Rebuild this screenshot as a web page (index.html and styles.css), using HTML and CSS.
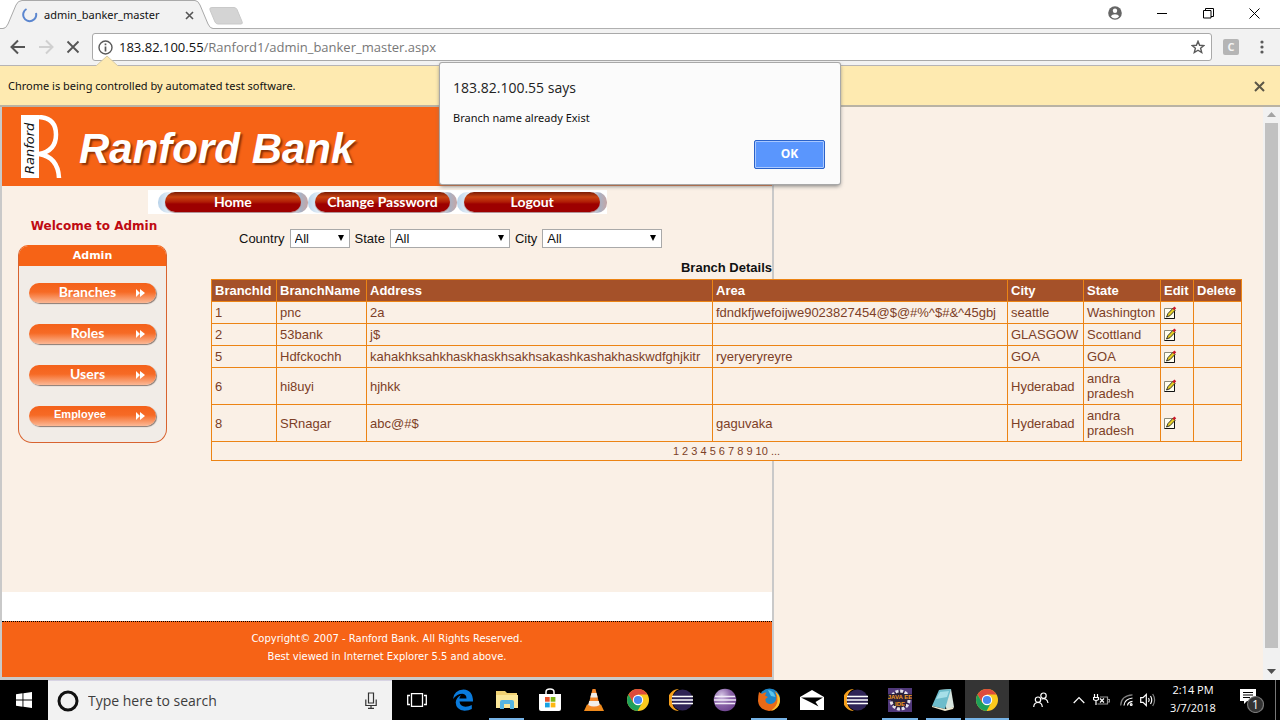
FILE: index.html
```html
<!DOCTYPE html>
<html lang="en">
<head>
<meta charset="utf-8">
<title>admin_banker_master</title>
<link rel="stylesheet" href="styles.css">
</head>
<body>
<svg class="defs" aria-hidden="true">
  <symbol id="chrome" viewBox="0 0 24 24">
    <circle cx="12" cy="12" r="11" fill="#fbc91d"/>
    <path d="M12 12 2.500 6.500A11 11 0 0 1 21.500 6.500H12z" fill="#de4b3c"/>
    <path d="M2.500 6.500 7.300 14.800 12 12 12 6.500z" fill="#de4b3c"/>
    <path d="M2.500 6.500A11 11 0 0 0 11.500 23L16 15 7.400 15z" fill="#1ea05a"/>
    <circle cx="12" cy="12" r="5.200" fill="#fff"/>
    <circle cx="12" cy="12" r="4.100" fill="#4688f1"/>
  </symbol>
  <symbol id="eclipse" viewBox="0 0 24 24">
    <path d="M10 1A11 11 0 0 0 10 23A12 12 0 0 1 10 1z" fill="#f7a01c"/>
    <circle cx="13.500" cy="12" r="10.500" fill="#2f2456"/>
    <path d="M3 8.500h21M2.500 12h21.500M3 15.500h21" stroke="#fff" stroke-width="1.700"/>
  </symbol>
  <symbol id="edit" viewBox="0 0 14 14">
    <path d="M.5 2.500h10v10h-10z" fill="#fffef0" stroke="#8a8a7a"/>
    <path d="M10.500 5v7.500H.5" fill="none" stroke="#111"/>
    <path d="M2.500 11 4 7.500 9 2.200 11.200 4.200 6 9.700z" fill="#e8d024" stroke="#222" stroke-width=".9"/>
    <path d="M9.300 3.300 11.300 1.300" stroke="#c9182b" stroke-width="2.600"/>
  </symbol>
  <symbol id="next" viewBox="0 0 9 8"><path d="M0 0 4 4 0 8zM4 0 9 4 4 8z" fill="#fff"/></symbol>
</svg>

<header class="tabstrip">
  <svg class="tabshape" viewBox="0 0 250 29" aria-hidden="true">
    <path d="M0 28.500H3Q6 28.500 8 24L16 5Q18 .5 22 .5H195Q198 .5 200 5L208 24Q210 28.500 213 28.500H250V29H0z" fill="#f2f2f2"/>
    <path d="M0 28.500H3Q6 28.500 8 24L16 5Q18 .5 22 .5H195Q198 .5 200 5L208 24Q210 28.500 213 28.500H250" fill="none" stroke="#a9a9a9"/>
    <path d="M212 7.500h22q2 0 3 2l5 12q1 2.500-1 2.500h-23q-2 0-3-2l-5-12q-1-2.500 2-2.500z" fill="#d4d4d4" stroke="#c9c9c9"/>
  </svg>
  <div class="tab">
    <svg width="16" height="16" viewBox="0 0 16 16"><path d="M4.500 2A6.500 6.500 0 1 0 14 6" fill="none" stroke="#5b86cf" stroke-width="2"/></svg>
    <span class="tabtitle">admin_banker_master</span>
    <button class="iconbtn" aria-label="Close tab"><svg width="9" height="9" viewBox="0 0 9 9"><path d="M1 1 8 8M8 1 1 8" stroke="#555" stroke-width="1.600"/></svg></button>
  </div>
  <div class="wincontrols">
    <button class="iconbtn" aria-label="Profile"><svg width="14" height="14" viewBox="0 0 14 14"><circle cx="7" cy="7" r="6.800" fill="#666"/><circle cx="7" cy="4.800" r="2.200" fill="#fff"/><path d="M2.800 10.300Q4 8.200 7 8.200T11.200 10.300Q9.500 12.500 7 12.500T2.800 10.300z" fill="#fff"/></svg></button>
    <button class="iconbtn" aria-label="Minimize"><svg width="11" height="11" viewBox="0 0 11 11"><path d="M0 5.500h10" stroke="#000"/></svg></button>
    <button class="iconbtn" aria-label="Restore"><svg width="11" height="11" viewBox="0 0 11 11"><path d="M.5 2.500h7.500v7.500H.5zM2.500 2.500V.5h8v8H8" fill="none" stroke="#000"/></svg></button>
    <button class="iconbtn" aria-label="Close"><svg width="11" height="11" viewBox="0 0 11 11"><path d="M.5.5 10.500 10.500M10.500.5.5 10.500" stroke="#000"/></svg></button>
  </div>
</header>

<div class="toolbar">
  <button class="iconbtn" aria-label="Back"><svg width="16" height="16" viewBox="0 0 16 16"><path d="M15 8H2M8 1.500 1.500 8 8 14.500" fill="none" stroke="#555" stroke-width="2"/></svg></button>
  <button class="iconbtn" aria-label="Forward"><svg width="16" height="16" viewBox="0 0 16 16"><path d="M1 8H14M8 1.500 14.500 8 8 14.500" fill="none" stroke="#d0d0d0" stroke-width="2"/></svg></button>
  <button class="iconbtn" aria-label="Stop"><svg width="14" height="14" viewBox="0 0 14 14"><path d="M1.500 1.500 12.500 12.500M12.500 1.500 1.500 12.500" stroke="#555" stroke-width="1.800"/></svg></button>
  <div class="omnibox">
    <svg width="15" height="15" viewBox="0 0 15 15"><circle cx="7.500" cy="7.500" r="6.500" fill="none" stroke="#5a5a5a" stroke-width="1.400"/><path d="M7.500 6.500v5M7.500 3.500v1.700" stroke="#5a5a5a" stroke-width="1.700"/></svg>
    <div class="url"><b>183.82.100.55</b>/Ranford1/admin_banker_master.aspx</div>
    <button class="iconbtn" aria-label="Bookmark"><svg width="14" height="14" viewBox="0 0 14 14"><path d="M7 1.300 8.600 5.300 12.900 5.600 9.600 8.300 10.700 12.500 7 10.200 3.300 12.500 4.400 8.300 1.100 5.600 5.400 5.300z" fill="none" stroke="#5a5a5a" stroke-width="1.400"/></svg></button>
  </div>
  <button class="ext" aria-label="Extension">C</button>
  <button class="iconbtn" aria-label="Menu"><svg width="4" height="14" viewBox="0 0 4 14"><circle cx="2" cy="2" r="1.600" fill="#5a5a5a"/><circle cx="2" cy="7" r="1.600" fill="#5a5a5a"/><circle cx="2" cy="12" r="1.600" fill="#5a5a5a"/></svg></button>
</div>

<div class="infobar">
  <svg class="notch" viewBox="0 0 22 12" aria-hidden="true"><path d="M0 11 11 1 22 11V12H0z" fill="#feeab0"/><path d="M0 11 11 1 22 11" fill="none" stroke="#d6cba8"/></svg>
  <span>Chrome is being controlled by automated test software.</span>
  <button class="iconbtn" aria-label="Dismiss"><svg width="11" height="11" viewBox="0 0 11 11"><path d="M1 1 10 10M10 1 1 10" stroke="#5c5747" stroke-width="2"/></svg></button>
</div>

<div class="viewport">
  <main class="page">
    <div class="frame">
      <div class="banner">
        <svg width="41" height="63" viewBox="0 0 41 63" role="img" aria-label="Ranford">
          <path d="M0 0h18v63H0z" fill="#fff"/>
          <path d="M18 2Q35 3 35 19.500T18 39Q37 42 38 63" fill="none" stroke="#fff" stroke-width="4.500"/>
          <text x="-59" y="13" transform="rotate(-90)" class="logotext">Ranford</text>
        </svg>
        <h1>Ranford Bank</h1>
      </div>
      <div class="body">
        <nav class="topnav">
          <a href="#"><span>Home</span></a><a href="#"><span>Change Password</span></a><a href="#"><span>Logout</span></a>
        </nav>
        <div class="columns">
          <aside class="side">
            <p class="welcome">Welcome to Admin</p>
            <div class="panel">
              <h2>Admin</h2>
              <ul>
                <li><a href="#">Branches<svg width="9" height="8"><use href="#next"/></svg></a></li>
                <li><a href="#">Roles<svg width="9" height="8"><use href="#next"/></svg></a></li>
                <li><a href="#">Users<svg width="9" height="8"><use href="#next"/></svg></a></li>
                <li><a href="#" class="plain">Employee<svg width="9" height="8"><use href="#next"/></svg></a></li>
              </ul>
            </div>
          </aside>
          <section class="content">
            <form class="filters">
              <label for="country">Country</label>
              <span class="pick short"><select id="country"><option>All</option></select></span>
              <label for="state">State</label>
              <span class="pick"><select id="state"><option>All</option></select></span>
              <label for="city">City</label>
              <span class="pick"><select id="city"><option>All</option></select></span>
            </form>
            <table class="branches">
              <caption>Branch Details</caption>
              <colgroup><col class="c-id"><col class="c-name"><col class="c-addr"><col class="c-area"><col class="c-city"><col class="c-state"><col class="c-edit"><col class="c-del"></colgroup>
              <thead><tr><th>BranchId</th><th>BranchName</th><th>Address</th><th>Area</th><th>City</th><th>State</th><th>Edit</th><th>Delete</th></tr></thead>
              <tbody>
                <tr><td>1</td><td>pnc</td><td>2a</td><td>fdndkfjwefoijwe9023827454@$@#%^$#&amp;^45gbj</td><td>seattle</td><td>Washington</td><td><a href="#" aria-label="Edit"><svg width="14" height="14"><use href="#edit"/></svg></a></td><td></td></tr>
                <tr><td>2</td><td>53bank</td><td>j$</td><td></td><td>GLASGOW</td><td>Scottland</td><td><a href="#" aria-label="Edit"><svg width="14" height="14"><use href="#edit"/></svg></a></td><td></td></tr>
                <tr><td>5</td><td>Hdfckochh</td><td>kahakhksahkhaskhaskhsakhsakashkashakhaskwdfghjkitr</td><td>ryeryeryreyre</td><td>GOA</td><td>GOA</td><td><a href="#" aria-label="Edit"><svg width="14" height="14"><use href="#edit"/></svg></a></td><td></td></tr>
                <tr><td>6</td><td>hi8uyi</td><td>hjhkk</td><td></td><td>Hyderabad</td><td>andra pradesh</td><td><a href="#" aria-label="Edit"><svg width="14" height="14"><use href="#edit"/></svg></a></td><td></td></tr>
                <tr><td>8</td><td>SRnagar</td><td>abc@#$</td><td>gaguvaka</td><td>Hyderabad</td><td>andra pradesh</td><td><a href="#" aria-label="Edit"><svg width="14" height="14"><use href="#edit"/></svg></a></td><td></td></tr>
              </tbody>
              <tfoot><tr><td colspan="8" class="pager"><span>1</span> <a href="#">2</a> <a href="#">3</a> <a href="#">4</a> <a href="#">5</a> <a href="#">6</a> <a href="#">7</a> <a href="#">8</a> <a href="#">9</a> <a href="#">10</a> <a href="#">...</a></td></tr></tfoot>
            </table>
          </section>
        </div>
      </div>
      <footer class="foot">
        <p>Copyright© 2007 - Ranford Bank. All Rights Reserved.</p>
        <p>Best viewed in Internet Explorer 5.5 and above.</p>
      </footer>
    </div>
  </main>
  <div class="scrollbar" aria-hidden="true">
    <svg width="9" height="5" viewBox="0 0 9 5"><path d="M0 5 4.500 0 9 5z" fill="#a3a3a3"/></svg>
    <div class="thumb"></div>
    <svg width="9" height="5" viewBox="0 0 9 5"><path d="M0 0 4.500 5 9 0z" fill="#505050"/></svg>
  </div>
</div>

<div class="taskbar">
  <button class="start" aria-label="Start"><svg width="16" height="16" viewBox="0 0 16 16"><path d="M0 2.300 6.500 1.300V7.500H0zM7.400 1.200 16 0V7.500H7.400zM0 8.500H6.500V14.700L0 13.700zM7.400 8.500H16V16L7.400 14.800z" fill="#fff"/></svg></button>
  <div class="search">
    <svg width="22" height="22" viewBox="0 0 22 22"><circle cx="11" cy="11" r="9" fill="none" stroke="#111" stroke-width="3"/></svg>
    <input type="text" placeholder="Type here to search" aria-label="Type here to search">
    <svg width="12" height="17" viewBox="0 0 12 17"><path d="M3.500 1h5v10h-5zM.8 7.500V13.500H11.200V7.500M6 13.500V16M3 16.300h6" fill="none" stroke="#333" stroke-width="1.200"/></svg>
  </div>
  <button class="taskview" aria-label="Task view"><svg width="20" height="14" viewBox="0 0 20 14"><path d="M4.500.7h11v12.600h-11zM3 2.500H.7v9H3M17 2.500h2.300v9H17" fill="none" stroke="#fff" stroke-width="1.300"/></svg></button>
  <div class="apps">
    <button aria-label="Edge"><svg width="22" height="22" viewBox="0 0 22 22"><path d="M1 10Q2 1 11.500 .5 21 1 21 12.500H7.500Q8 17.500 13.500 17.800 17 17.800 19.800 16V20Q17 21.700 12.500 21.700 4 21 3.700 13.500 4 8.500 9 6.300 7.400 8 7.400 9.600H14.500Q14.500 5 10.500 4.700 5 4.800 1 10z" fill="#0a7bdc"/></svg></button>
    <button class="open" aria-label="File Explorer"><svg width="22" height="20" viewBox="0 0 22 20"><path d="M0 1h9l2 2h10v14H0z" fill="#f0d173"/><path d="M0 5h22v13H0z" fill="#fbe799"/><path d="M4 19V12q0-2 2-2h10q2 0 2 2v7h-4v-5H8v5z" fill="#55b5e2"/></svg></button>
    <button aria-label="Store"><svg width="24" height="24" viewBox="0 0 24 24"><path d="M8 7V4q0-3 4-3t4 3v3" fill="none" stroke="#fff" stroke-width="1.500"/><path d="M1 6h22v15q0 2-2 2H3q-2 0-2-2z" fill="#fff"/><path d="M7 9h4.700v4.700H7z" fill="#e8512a"/><path d="M12.700 9h4.700v4.700h-4.700z" fill="#7db613"/><path d="M7 14.700h4.700v4.700H7z" fill="#19a2e3"/><path d="M12.700 14.700h4.700v4.700h-4.700z" fill="#fdb813"/></svg></button>
    <button aria-label="VLC"><svg width="20" height="24" viewBox="0 0 20 24"><path d="M3 16.500h14l3 6.500H0z" fill="#f08a1c"/><path d="M8.500 1h3L16 18.500Q10 22 4 18.500z" fill="#f4862a"/><path d="M7.500 5h5l1.200 4.500H6.300zM5.200 13h9.600l1 4Q10 20 4.200 17z" fill="#f1eee9"/></svg></button>
    <button aria-label="Chrome"><svg width="24" height="24"><use href="#chrome"/></svg></button>
    <button aria-label="Eclipse"><svg width="24" height="24"><use href="#eclipse"/></svg></button>
    <button aria-label="Eclipse Installer"><svg width="24" height="24" viewBox="0 0 24 24"><defs><radialGradient id="orb" cx=".35" cy=".3" r=".8"><stop offset="0" stop-color="#d6c6e6"/><stop offset=".5" stop-color="#8a64a8"/><stop offset="1" stop-color="#6a3f8c"/></radialGradient></defs><circle cx="12" cy="12" r="11.300" fill="url(#orb)"/><path d="M2 8.500h20M1 12h22M2 15.500h20" stroke="#f1eaf8" stroke-width="1.500"/></svg></button>
    <button class="open" aria-label="Firefox"><svg width="24" height="24" viewBox="0 0 24 24"><circle cx="12.500" cy="11" r="10.500" fill="#1d86c8"/><path d="M11 2Q17 3 18.500 9L14 8z" fill="#5cc6ee"/><path d="M2 4 5 6Q7 4 9.500 4.500L8 7.500 11 9 8.500 11Q8 15 12 16 17 16.500 19 12 20 7 17.500 3 23 7 23 13 22 22.500 12 23 2 22 1 13 1 8 2 4z" fill="#e96a17"/><path d="M18.500 4Q23 7 23 13 22 21 14 22.800 20.500 18 20.500 12 20.500 7 18.500 4z" fill="#fbc333"/></svg></button>
    <button aria-label="Mail"><svg width="24" height="20" viewBox="0 0 24 20"><path d="M0 7 12 0 24 7V20H0z" fill="#fff"/><path d="M1 7.500H23L15.500 12 18.500 16.500 11 12.500z" fill="#000"/></svg></button>
    <button aria-label="Eclipse"><svg width="24" height="24"><use href="#eclipse"/></svg></button>
    <button class="open" aria-label="Java EE IDE"><svg width="24" height="24" viewBox="0 0 24 24"><path d="M0 0h24v24H0z" fill="#50387a"/><circle cx="12" cy="12" r="9" fill="#29203a" stroke="#e5e0ea" stroke-width="3" stroke-dasharray="3 1.700"/><path d="M0 6h24v6H0zM6 12h12v6H6z" fill="#29203a"/><text x="12" y="11" class="jee">JAVA EE</text><text x="12" y="18" class="jee">IDE</text></svg></button>
    <button class="open" aria-label="Notepad"><svg width="24" height="22" viewBox="0 0 24 22"><path d="M8 1 20 0 23 18 16 21z" fill="#d8e5df"/><path d="M8 1 20 0 14 20 1 17z" fill="#6dbccb"/><path d="M9 3 18 2 16 8 5 10z" fill="#a6dfe8"/><path d="M1 17 14 20 23 18 22 20 14 22 1 18z" fill="#ece7cf"/></svg></button>
    <button class="open current" aria-label="Chrome"><svg width="24" height="24"><use href="#chrome"/></svg></button>
  </div>
  <div class="tray">
    <button class="people" aria-label="People"><svg width="16" height="16" viewBox="0 0 16 16"><circle cx="10.500" cy="3.700" r="2.700"/><path d="M8.500 7Q14 5.500 15 11"/><circle cx="5" cy="7.700" r="2.700"/><path d="M.7 15Q1 10.500 5 10.500T9.300 15"/></svg></button>
    <button class="more" aria-label="Hidden icons"><svg width="12" height="8" viewBox="0 0 12 8"><path d="M.7 7 6 1.500 11.300 7"/></svg></button>
    <button class="battery" aria-label="Battery"><svg width="17" height="12" viewBox="0 0 17 12"><path d="M1.500 0v3M4.500 0v3M.5 3.500h5v2q-2.500 2-5 0zM3 6.500V11"/><path d="M7 3h7.500v7H4.500M15 5.500h1.500v2.500H15" opacity=".6"/><path d="M7 4.500l4 4M11 4.500 7 8.500"/></svg></button>
    <button class="wifi" aria-label="Network"><svg width="13" height="12" viewBox="0 0 13 12"><path d="M.7 11.500Q1 1.500 12.500.8" opacity=".5"/><path d="M4 11.500Q4.500 5 12.500 4M7.500 11.500Q8 7.800 12.500 7.300"/><circle cx="11.200" cy="10.500" r=".9"/></svg></button>
    <button class="sound" aria-label="Volume"><svg width="16" height="14" viewBox="0 0 16 14"><path d="M.7 4.700H3L6.300 1.500V12.500L3 9.300H.7zM8.500 5Q10 7 8.500 9M10.500 3Q13 7 10.500 11"/><path d="M12.700 1Q16.500 7 12.700 13" opacity=".5"/></svg></button>
    <div class="clock"><span>2:14 PM</span><span>3/7/2018</span></div>
    <button class="notes" aria-label="Notifications"><svg width="24" height="26" viewBox="0 0 24 26"><path d="M0 2h16v12H7l-3 3v-3H0z" class="solid"/><path d="M3 5.500h10M3 8h10M3 10.500h7" class="lines"/><circle cx="15.500" cy="17.500" r="8" class="badge"/><text x="15.500" y="22" class="count">1</text></svg></button>
    <div class="peek"></div>
  </div>
</div>

<div class="dialog" role="alertdialog" aria-labelledby="dlg-title" aria-describedby="dlg-text">
  <h2 id="dlg-title">183.82.100.55 says</h2>
  <p id="dlg-text">Branch name already Exist</p>
  <button>OK</button>
</div>
</body>
</html>
```
FILE: styles.css
```css
* { box-sizing: border-box; }
html, body { height: 100%; }
body {
  margin: 0;
  display: flex;
  flex-direction: column;
  position: relative;
  overflow: hidden;
  background: #fff;
  font: 12px/16px "Open Sans", "Noto Sans", sans-serif;
  color: #111;
}
h1, h2, p, ul { margin: 0; padding: 0; }
ul { list-style: none; }
a { text-decoration: none; color: inherit; }
button { font: inherit; margin: 0; padding: 0; border: 0; background: none; color: inherit; }
svg { display: block; flex: none; }
.defs { position: absolute; width: 0; height: 0; }
.iconbtn { display: flex; align-items: center; justify-content: center; }

/* Browser window */
.tabstrip {
  flex: none;
  height: 29px;
  display: flex;
  justify-content: space-between;
  position: relative;
  border-bottom: 1px solid #b0b0b0;
}
.tabshape { position: absolute; left: 0; top: 0; width: 250px; height: 29px; }
.tab {
  position: relative;
  width: 210px;
  padding: 2px 16px 0 22px;
  display: flex;
  align-items: center;
  gap: 6px;
}
.tabtitle { flex: 1; font: 11px/16px "Noto Sans", sans-serif; white-space: nowrap; }
.wincontrols { display: flex; align-items: center; gap: 35px; padding: 0 20px 2px 0; }
.toolbar {
  flex: none;
  height: 37px;
  display: flex;
  align-items: center;
  gap: 12px;
  padding: 0 16px 0 10px;
  background: #f2f2f2;
  border-bottom: 1px solid #b6b4b5;
}
.omnibox {
  flex: 1;
  height: 28px;
  display: flex;
  align-items: center;
  gap: 6px;
  padding: 0 6px 0 5px;
  background: #fff;
  border: 1px solid #a9a9a9;
  border-radius: 3px;
}
.url { flex: 1; font-size: 13px; color: #777; white-space: nowrap; }
.url b { font-weight: 400; color: #111; }
.ext { width: 16px; height: 16px; margin: 0 9px 0 -1px; border-radius: 2px; background: #b5b5b5; color: #f4f4f4; font-size: 11px; line-height: 16px; font-weight: 700; }
.infobar {
  flex: none;
  height: 41px;
  position: relative;
  display: flex;
  align-items: center;
  justify-content: space-between;
  padding: 1px 15px 0 8px;
  background: #feeab0;
  border-bottom: 2px solid #b9b3a4;
  font: 11px/16px "Noto Sans", sans-serif;
}
.notch { position: absolute; left: 96px; top: -11px; width: 22px; height: 12px; }
.viewport { flex: 1; min-height: 0; display: flex; }
.page { flex: 1; min-width: 0; overflow: hidden; background: #faf0e6; display: flex; }
.scrollbar {
  flex: none;
  width: 17px;
  display: flex;
  flex-direction: column;
  align-items: center;
  gap: 6px;
  padding: 5px 2px 6px;
  background: #f1f1f1;
}
.scrollbar .thumb { flex: 1; width: 13px; margin-bottom: 15px; background: #c1c1c1; }

/* Bank site */
.frame {
  flex: 1;
  max-width: 774px;
  display: flex;
  flex-direction: column;
  border: solid #c9c9c9;
  border-width: 0 2px 3px;
  font-family: "Liberation Sans", Arial, sans-serif;
}
.banner {
  flex: none;
  height: 79px;
  display: flex;
  align-items: center;
  gap: 17px;
  padding-left: 19px;
  background: #f66316;
}
.banner h1 {
  font: italic 700 42px/48px "Liberation Sans", Arial, sans-serif;
  padding-top: 4px;
  color: #fff;
  text-shadow: 2px 2px 2px #8a3208;
}
.logotext { font: italic 13px "DejaVu Sans", Verdana, sans-serif; fill: #111; }
.body { flex: 1; min-height: 0; padding-top: 4px; }
.topnav {
  display: flex;
  width: 459px;
  margin-left: 146px;
  padding: 2px 0 1px 10px;
  background: #fff;
}
.topnav a {
  flex: 1;
  height: 21px;
  padding: 0 7px;
  border-radius: 10px;
  background: linear-gradient(90deg, #b9d3ea, #fff 12%, #fff 88%, #a9b2c4 95%, #c4a5a5);
}
.topnav span {
  display: block;
  height: 20px;
  border-radius: 10px;
  background: linear-gradient(#7a1c06, #c94412 25%, #b01c05 50%, #9d0000 60%, #9d0000);
  box-shadow: 0 1px 1px #a88;
  color: #fff;
  font: 700 14px/19px Lato, sans-serif;
  text-align: center;
}
.columns { display: flex; align-items: flex-start; }
.side { flex: none; width: 209px; padding: 4px 44px 0 16px; }
.welcome {
  font: 700 12px/16px "DejaVu Sans", Verdana, sans-serif;
  padding-left: 3px;
  color: #bf0a12;
  text-align: center;
  white-space: nowrap;
}
.panel {
  margin-top: 11px;
  border: 1px solid #d8632f;
  border-top-color: #f66316;
  border-radius: 10px 10px 14px 14px;
  background: #f1ece7;
  overflow: hidden;
}
.panel h2 {
  background: #f66316;
  color: #fff;
  font: 700 11px/20px "DejaVu Sans", Verdana, sans-serif;
  text-align: center;
}
.panel ul { display: grid; gap: 21px; padding: 17px 10px 16px; }
.panel li a {
  display: flex;
  align-items: center;
  justify-content: center;
  position: relative;
  height: 20px;
  border-radius: 10px;
  background: linear-gradient(#f4611a, #f66a25 45%, #fbb896);
  box-shadow: 1px 1px 1px #8c7a72;
  color: #fff;
  font: 700 14px/18px Lato, sans-serif;
  padding: 0 10px 2px 0;
}
.panel li a.plain { font: 700 11px/16px "Liberation Sans", Arial, sans-serif; padding: 0 25px 4px 0; }
.panel li svg { position: absolute; right: 11px; top: 6px; }
.content { flex: 1; min-width: 0; padding-top: 15px; }
.filters { display: flex; align-items: center; gap: 5px; padding-left: 28px; font-size: 13px; color: #111; }
.pick { position: relative; width: 120px; height: 19px; }
.pick.short { width: 60px; }
.pick select {
  display: block;
  width: 100%;
  height: 100%;
  appearance: none;
  padding: 0 4px;
  border: 1px solid #a9a9a9;
  border-radius: 0;
  background: #fff;
  color: #111;
  font: 13px/16px "Liberation Sans", Arial, sans-serif;
}
.pick::after {
  content: "";
  position: absolute;
  right: 6px;
  top: 6px;
  border: solid transparent;
  border-width: 6px 3px 0;
  border-top-color: #000;
}
.branches {
  table-layout: fixed;
  width: 1031px;
  margin-top: 12px;
  border-collapse: collapse;
  border: 1px solid #ec8414;
  background: #faf0e6;
  color: #7d3f26;
  font-size: 13px;
  line-height: 15px;
}
.branches caption { color: #111; font-weight: 700; line-height: 16px; padding-bottom: 3px; }
.branches th, .branches td { padding: 3px; border: 1px solid #ec8414; text-align: left; }
.branches th { background: #a55129; color: #fff; }
.branches .pager { text-align: center; font-size: 11px; line-height: 12px; }
.c-id { width: 65px; }
.c-name { width: 90px; }
.c-addr { width: 346px; }
.c-area { width: 295px; }
.c-city { width: 76px; }
.c-state { width: 77px; }
.c-edit { width: 33px; }
.c-del { width: 48px; }
.foot {
  flex: none;
  padding: 8px 0 11px;
  border-top: 1px dotted #000;
  background: #f66316;
  color: #fff;
  font: 10px/18px "DejaVu Sans", Verdana, sans-serif;
  text-align: center;
  box-shadow: 0 -29px 0 #fff;
}

/* Alert */
.dialog {
  position: absolute;
  left: 50%;
  top: 63px;
  width: 400px;
  margin-left: -200px;
  padding: 16px 15px 15px 13px;
  display: flex;
  flex-direction: column;
  background: #fbfbfb;
  border-radius: 2px;
  box-shadow: 0 0 0 1px #a8a8a8, 0 2px 4px #777;
}
.dialog h2 { font-size: 14px; font-weight: 400; line-height: 18px; color: #222; }
.dialog p { margin-top: 12px; font: 11px/18px "Noto Sans", sans-serif; color: #111; }
.dialog button {
  align-self: flex-end;
  width: 71px;
  height: 29px;
  margin-top: 13px;
  padding-bottom: 2px;
  border: 1px solid #2a62c9;
  border-radius: 2px;
  box-shadow: inset 0 0 0 1px #a9c8ff;
  background: #5a96fd;
  color: #fff;
  font-weight: 700;
}

/* Taskbar */
.taskbar { flex: none; height: 40px; display: flex; background: #000; color: #fff; }
.taskbar button { display: flex; align-items: center; justify-content: center; }
.start { width: 48px; }
.search {
  width: 344px;
  display: flex;
  align-items: center;
  gap: 9px;
  padding: 0 15px 0 9px;
  background: #f2f2f2;
  border-top: 1px solid #d8d4e4;
}
.search input { flex: 1; min-width: 0; padding: 0; border: 0; background: none; font: 14px/20px "Open Sans", sans-serif; }
.search input::placeholder { color: #3d3d3d; opacity: 1; }
.taskview { width: 49px; }
.apps { flex: 1; display: flex; }
.apps button { flex: 1; position: relative; }
.apps .open::after { content: ""; position: absolute; left: 4px; right: 4px; bottom: 0; height: 2px; background: #76b3e6; }
.apps .current { background: #343434; }
.apps .current::after { left: 0; right: 0; }
.jee { font: 700 6px "Liberation Sans", Arial, sans-serif; fill: #f59a1e; text-anchor: middle; }
.tray { display: flex; }
.tray path, .tray circle { fill: none; stroke: #fff; stroke-width: 1.2; }
.people { width: 64px; }
.more { width: 12px; }
.battery { width: 32px; }
.wifi { width: 18px; }
.sound { width: 26px; }
.clock { width: 64px; display: flex; flex-direction: column; justify-content: center; align-items: center; font-size: 11px; line-height: 18px; padding-bottom: 2px; }
.notes { width: 54px; }
.tray .solid { fill: #fff; stroke: none; }
.tray .lines { stroke: #000; }
.tray .badge { fill: #333; stroke: #777; }
.count { font: 12px "Open Sans", sans-serif; fill: #fff; text-anchor: middle; }
.peek { width: 5px; margin-left: -4px; border-left: 1px solid #777; }
```
